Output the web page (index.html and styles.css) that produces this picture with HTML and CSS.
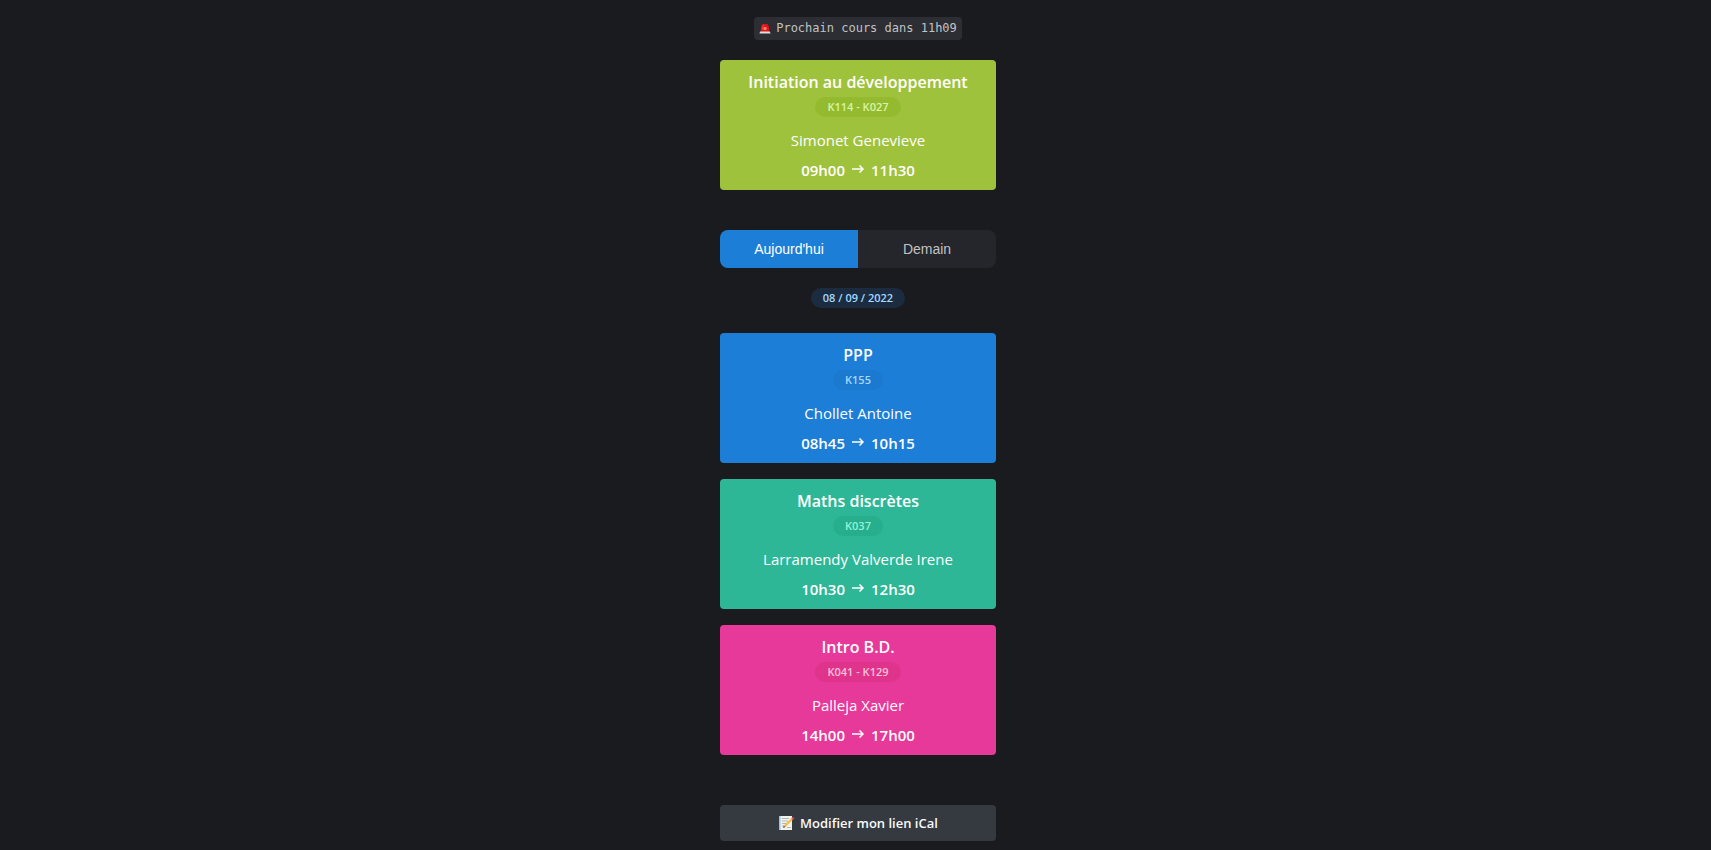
FILE: index.html
```html
<!DOCTYPE html>
<html lang="fr">
<head>
<meta charset="utf-8">
<meta name="viewport" content="width=device-width, initial-scale=1">
<title>Emploi du temps</title>
<link rel="stylesheet" href="styles.css">
</head>
<body>
<main class="page">
  <code class="countdown">
    <svg class="siren" viewBox="0 0 12 12" aria-hidden="true">
      <path d="M1.5 9 2.3 3.2Q2.6 1 4.6 1h2.8q2 0 2.3 2.2L10.500 9z" fill="#e0151c"/>
      <path d="M3.300 6.500 3.800 3Q4 2 5 2" fill="none" stroke="#ff3a35" stroke-width="1"/>
      <circle cx="6" cy="5.500" r="1.800" fill="#ff7a62"/>
      <path d="M1.200 8.500h9.600l.8 2H.4z" fill="#d9dde0"/>
    </svg>
    <span>Prochain cours dans 11h09</span>
  </code>

  <article class="course lime">
    <h2 class="title">Initiation au développement</h2>
    <span class="badge">K114 - K027</span>
    <p class="teacher">Simonet Genevieve</p>
    <p class="time"><span>09h00</span><svg class="arrow" viewBox="0 0 14 10" aria-hidden="true"><path d="M1 4h11M8.500 .5 12 4 8.500 7.500"/></svg><span>11h30</span></p>
  </article>

  <div class="days">
    <button class="day active" type="button" aria-pressed="true">Aujourd'hui</button>
    <button class="day" type="button" aria-pressed="false">Demain</button>
  </div>

  <time class="badge date" datetime="2022-09-08">08 / 09 / 2022</time>

  <section class="courses">
    <article class="course blue">
      <h2 class="title">PPP</h2>
      <span class="badge">K155</span>
      <p class="teacher">Chollet Antoine</p>
      <p class="time"><span>08h45</span><svg class="arrow" viewBox="0 0 14 10" aria-hidden="true"><path d="M1 4h11M8.500 .5 12 4 8.500 7.500"/></svg><span>10h15</span></p>
    </article>
    <article class="course teal">
      <h2 class="title">Maths discrètes</h2>
      <span class="badge">K037</span>
      <p class="teacher">Larramendy Valverde Irene</p>
      <p class="time"><span>10h30</span><svg class="arrow" viewBox="0 0 14 10" aria-hidden="true"><path d="M1 4h11M8.500 .5 12 4 8.500 7.500"/></svg><span>12h30</span></p>
    </article>
    <article class="course pink">
      <h2 class="title">Intro B.D.</h2>
      <span class="badge">K041 - K129</span>
      <p class="teacher">Palleja Xavier</p>
      <p class="time"><span>14h00</span><svg class="arrow" viewBox="0 0 14 10" aria-hidden="true"><path d="M1 4h11M8.500 .5 12 4 8.500 7.500"/></svg><span>17h00</span></p>
    </article>
  </section>

  <button class="edit" type="button">
    <svg class="memo" viewBox="0 0 17 16" aria-hidden="true">
      <path d="M1 1h13v14H1z" fill="#f1f1ee"/>
      <path d="M1 1h1.500v14H1z" fill="#8ec5ee"/>
      <path d="M4 3.500h7M4 6h6M4 8.500h4M4 11h3M9 12.500h4" stroke="#b4b6b8" stroke-width="1"/>
      <path d="M6.500 11.500 14.500 3.500" stroke="#f6b93b" stroke-width="2"/>
      <path d="m14 4 1.700-1.500" stroke="#e0464f" stroke-width="2.200"/>
      <path d="m5 13 .8-2.400 1.600 1.600z" fill="#6b5a3c"/>
    </svg>
    <span>Modifier mon lien iCal</span>
  </button>
</main>
</body>
</html>
```
FILE: styles.css
```css
* { box-sizing: border-box; }

body {
  margin: 0;
  padding-left: 5px;
  background: #1a1b1e;
  color: #fff;
  font-family: "Open Sans", "Noto Sans", sans-serif;
}

.page {
  display: flex;
  flex-direction: column;
  align-items: center;
  width: fit-content;
  min-width: 276px;
  margin: 0 auto;
  padding: 17px 0 9px;
}

.countdown {
  display: flex;
  align-items: center;
  gap: 5px;
  margin-bottom: 20px;
  padding: 0 5px;
  border-radius: 4px;
  background: #2c2e33;
  color: #c1c2c5;
  font: 12px/23px "DejaVu Sans Mono", monospace;
}

.siren { width: 12px; height: 12px; }

.course {
  display: flex;
  flex-direction: column;
  align-items: center;
  align-self: stretch;
  padding: 8px 16px 7px;
  border-radius: 4px;
}

.lime { background: #9fc23c; }
.blue { background: #1c7ed6; }
.teal { background: #2eb797; }
.pink { background: #e63999; }

.title {
  margin: 0 0 1px;
  font-size: 16px;
  font-weight: 600;
  line-height: 28px;
}

.badge {
  padding: 0 12px;
  border-radius: 10px;
  font-size: 11px;
  font-weight: 600;
  line-height: 20px;
}

.lime .badge { background: #94bb30; color: #d8f5a2; }
.blue .badge { background: #1b79d0; color: #a5d8ff; }
.teal .badge { background: #27ae8d; color: #96f2d7; }
.pink .badge { background: #df348c; color: #fcc2d7; }

.teacher {
  margin: 10px 0 4px;
  font-size: 15px;
  line-height: 26px;
}

.time {
  display: flex;
  align-items: center;
  gap: 6px;
  margin: 0;
  font-size: 15px;
  font-weight: 600;
  line-height: 26px;
}

.arrow {
  width: 14px;
  height: 10px;
  fill: none;
  stroke: currentColor;
  stroke-width: 1.5;
}

.days {
  display: grid;
  grid-template-columns: 1fr 1fr;
  align-self: stretch;
  margin: 40px 0 20px;
  overflow: hidden;
  border-radius: 8px;
  background: #25262b;
}

.day {
  padding: 0;
  border: 0;
  background: none;
  color: #c1c2c5;
  font: 14px/38px "Liberation Sans", Arial, sans-serif;
}

.day.active { background: #1c7ed6; color: #fff; }

.date { background: #1b2c41; color: #a5d8ff; }

.courses {
  display: grid;
  gap: 16px;
  align-self: stretch;
  margin: 25px 0 50px;
}

.edit {
  display: flex;
  align-items: center;
  justify-content: center;
  gap: 5px;
  align-self: stretch;
  padding: 0;
  border: 0;
  border-radius: 4px;
  background: #343a40;
  color: #f8f9fa;
  font: 600 13px/36px "Open Sans", "Noto Sans", sans-serif;
}

.memo { width: 17px; height: 16px; }
```
